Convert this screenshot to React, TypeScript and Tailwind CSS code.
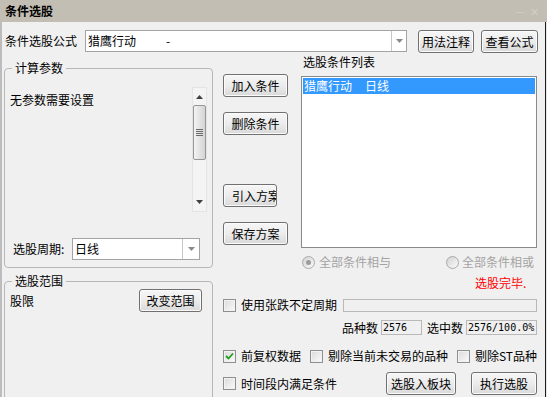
import React from "react";

const Btn = ({ children, className = "" }: { children: React.ReactNode; className?: string }) => (
  <div
    className={`flex h-[23px] shrink-0 items-center overflow-hidden whitespace-nowrap rounded-[3px] border border-[#707070] bg-linear-to-b from-[#f6f6f6] via-[#ececec] to-[#d9d9d9] text-[12px] leading-[14px] text-black shadow-[inset_0_0_0_1px_#fbfbfb] ${className}`}
  >
    {children}
  </div>
);

const Check = ({ checked = false }: { checked?: boolean }) => (
  <div className="flex h-[13px] w-[13px] shrink-0 items-center justify-center border border-[#8e8f8f] bg-linear-to-br from-[#dadada] to-[#fbfbfb] shadow-[inset_0_0_0_1px_#f2f2f2]">
    {checked && (
      <svg width="9" height="8" viewBox="0 0 9 8">
        <path d="M1 4 L3.5 6.5 L8 1.5" stroke="#1e9e1e" strokeWidth="1.8" fill="none" />
      </svg>
    )}
  </div>
);

const Radio = ({ dot = false }: { dot?: boolean }) => (
  <div className="flex h-[13px] w-[13px] shrink-0 items-center justify-center rounded-full border border-[#a9a9a9] bg-linear-to-br from-[#d2d2d2] to-[#fbfbfb]">
    {dot && <div className="h-[5px] w-[5px] rounded-full bg-[#9c9c9c]" />}
  </div>
);

const Arrow = ({ up = false, color = "#7a7a7a" }: { up?: boolean; color?: string }) => (
  <svg width="7" height="4" viewBox="0 0 7 4">
    <path d={up ? "M0 4 L7 4 L3.5 0 Z" : "M0 0 L7 0 L3.5 4 Z"} fill={color} />
  </svg>
);

const Combo = ({ children, className = "", btn = "w-[15px]" }: { children: React.ReactNode; className?: string; btn?: string }) => (
  <div className={`flex h-[22px] shrink-0 border border-[#a3a3a3] bg-white ${className}`}>
    <div className="flex flex-1 items-center overflow-hidden whitespace-nowrap pl-[2px] text-[12px] leading-[14px]">{children}</div>
    <div className={`flex items-center justify-center border-l border-[#c6c6c6] ${btn}`}>
      <Arrow color="#8a8a8a" />
    </div>
  </div>
);

const Scrollbar = () => (
  <div className="flex h-[125px] w-[15px] shrink-0 flex-col border border-[#e4e4e4] bg-[#f4f4f4]">
    <div className="flex h-[17px] items-center justify-center">
      <Arrow up color="#404040" />
    </div>
    <div className="flex h-[55px] flex-col items-center justify-center gap-[1px] rounded-[2px] border border-[#979797] bg-linear-to-r from-[#f3f3f3] to-[#d4d4d4]">
      <div className="h-[1px] w-[7px] bg-[#6a6a6a]" />
      <div className="h-[1px] w-[7px] bg-[#6a6a6a]" />
      <div className="h-[1px] w-[7px] bg-[#6a6a6a]" />
      <div className="h-[1px] w-[7px] bg-[#6a6a6a]" />
    </div>
    <div className="flex-1" />
    <div className="flex h-[18px] items-center justify-center">
      <Arrow color="#404040" />
    </div>
  </div>
);

export default function App() {
  return (
    <div className="h-[397px] w-[547px] overflow-hidden bg-[#f0f0f0] font-['Noto_Sans_CJK_SC','Liberation_Sans',sans-serif] text-[12px] leading-[14px] text-black">
      {/* title bar */}
      <div className="flex h-[22px] items-center bg-[#c3beb4] pl-[5px] pr-[8px]">
        <span className="text-[12px] font-bold leading-[14px]">条件选股</span>
        <span className="ml-auto text-[11px] text-[#d2cec6]">—&nbsp;&nbsp;✕</span>
      </div>

      <div className="flex">
        <div className="h-[375px] w-[2px] bg-[#bcbcbc]" />
        <div className="flex w-[543px] flex-col">
          {/* row 1 */}
          <div className="mt-[8px] flex h-[23px] items-start">
            <div className="ml-[3px] mt-[4px] w-[72px] whitespace-nowrap">条件选股公式</div>
            <Combo className="ml-[8px] w-[322px]">
              <span>猎鹰行动</span>
              <span className="ml-[30px]">-</span>
            </Combo>
            <Btn className="ml-[11px] w-[56px] justify-center">用法注释</Btn>
            <Btn className="ml-[7px] w-[57px] justify-center">查看公式</Btn>
          </div>

          {/* main */}
          <div className="flex items-start">
            {/* left column */}
            <div className="ml-[2px] mt-[8px] flex w-[209px] flex-col">
              <fieldset className="m-0 rounded-[4px] border border-[#b7b7b7] p-0">
                <legend className="ml-[7px] px-[3px] text-[12px] leading-[14px]">计算参数</legend>
                <div className="mt-[12px] flex justify-between pl-[5px] pr-[5px]">
                  <div className="mt-[6px]">无参数需要设置</div>
                  <Scrollbar />
                </div>
                <div className="mb-[7px] mt-[26px] flex items-center pl-[8px]">
                  <div className="w-[59px] whitespace-nowrap">选股周期:</div>
                  <Combo className="w-[128px]" btn="w-[17px]">
                    日线
                  </Combo>
                </div>
              </fieldset>

              <fieldset className="m-0 mt-[6px] h-[140px] rounded-[4px] border border-[#b7b7b7] p-0">
                <legend className="ml-[7px] px-[3px] text-[12px] leading-[14px]">选股范围</legend>
                <div className="mt-[1px] flex h-[23px] items-center justify-between pl-[5px] pr-[10px]">
                  <div>股限</div>
                  <Btn className="w-[63px] justify-center">改变范围</Btn>
                </div>
              </fieldset>
            </div>

            {/* right area */}
            <div className="ml-[10px] flex w-[314px] flex-col">
              <div className="flex items-start">
                <div className="mt-[21px] flex w-[65px] flex-col items-start">
                  <Btn className="w-[65px] justify-center">加入条件</Btn>
                  <Btn className="mt-[15px] w-[65px] justify-center">删除条件</Btn>
                  <Btn className="mt-[49px] w-[54px] justify-start pl-[8px]">引入方案</Btn>
                  <Btn className="mt-[15px] w-[65px] justify-center">保存方案</Btn>
                </div>
                <div className="ml-[13px] mt-[2px] flex w-[236px] flex-col">
                  <div className="h-[14px] pl-[2px]">选股条件列表</div>
                  <div className="mt-[7px] h-[172px] border border-[#8a8a8a] bg-white p-[1px]">
                    <div className="flex h-[16px] items-center bg-[#3399ff] pl-[1px] text-white">
                      <span>猎鹰行动</span>
                      <span className="ml-[13px]">日线</span>
                    </div>
                  </div>
                  <div className="mt-[7px] flex h-[14px] items-center text-[#a3a3a3]">
                    <div className="ml-[1px] flex w-[144px] items-center">
                      <Radio dot />
                      <span className="ml-[4px]">全部条件相与</span>
                    </div>
                    <div className="flex items-center">
                      <Radio />
                      <span className="ml-[3px]">全部条件相或</span>
                    </div>
                  </div>
                </div>
              </div>

              <div className="mt-[7px] h-[14px] pl-[252px] text-[#ff0000]">选股完毕.</div>

              <div className="mt-[8px] flex h-[14px] items-center">
                <Check />
                <span className="ml-[5px] whitespace-nowrap">使用张跌不定周期</span>
                <div className="ml-auto h-[13px] w-[194px] border border-[#b9b9b9] bg-[#f0f0f0]" />
              </div>

              <div className="mt-[8px] flex h-[15px] items-center justify-end">
                <span>品种数</span>
                <div className="ml-[3px] flex h-[15px] w-[41px] items-center border border-[#b9b9b9] bg-[#f0f0f0] pl-[1px] font-['DejaVu_Sans_Mono',monospace] text-[10px]">
                  2576
                </div>
                <span className="ml-[5px]">选中数</span>
                <div className="ml-[3px] flex h-[15px] w-[71px] items-center border border-[#b9b9b9] bg-[#f0f0f0] pl-[1px] font-['DejaVu_Sans_Mono',monospace] text-[10px]">
                  2576/100.0%
                </div>
              </div>

              <div className="mt-[14px] flex h-[14px] items-center whitespace-nowrap">
                <div className="flex w-[87px] items-center">
                  <Check checked />
                  <span className="ml-[5px]">前复权数据</span>
                </div>
                <div className="flex w-[147px] items-center">
                  <Check />
                  <span className="ml-[5px]">剔除当前未交易的品种</span>
                </div>
                <div className="flex items-center">
                  <Check />
                  <span className="ml-[5px]">剔除ST品种</span>
                </div>
              </div>

              <div className="mt-[9px] flex h-[23px] items-center whitespace-nowrap">
                <div className="flex w-[163px] items-center">
                  <Check />
                  <span className="ml-[5px]">时间段内满足条件</span>
                </div>
                <Btn className="w-[70px] justify-center">选股入板块</Btn>
                <Btn className="ml-[15px] w-[66px] justify-center">执行选股</Btn>
              </div>
            </div>
          </div>
        </div>
        <div className="h-[375px] w-[1px] bg-[#1c1c1c]" />
        <div className="h-[375px] w-[1px] bg-[#e6e6e6]" />
      </div>
    </div>
  );
}
